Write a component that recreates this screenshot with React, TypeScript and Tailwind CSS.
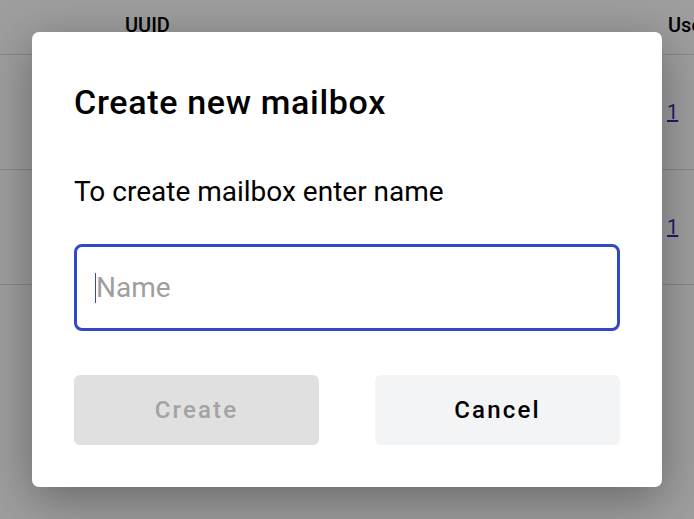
import React from "react";

export default function App() {
  return (
    <div
      className="relative w-[694px] h-[519px] overflow-hidden bg-white"
      style={{ fontFamily: "Roboto, 'Liberation Sans', sans-serif" }}
    >
      {/* Background table */}
      <div className="w-full">
        <div className="flex h-[55px] items-start border-b border-[#dcdcdc] pt-[13px] text-[20px] leading-[24px] font-medium text-black">
          <div className="w-[125px]" />
          <div className="flex-1">UUID</div>
          <div className="w-[26px] overflow-hidden whitespace-nowrap">Used</div>
        </div>
        {[0, 1].map((i) => (
          <div
            key={i}
            className="flex h-[115px] items-center border-b border-[#dcdcdc] text-[20px]"
          >
            <div className="flex-1" />
            <div className="w-[27px] text-[#2d2db3] underline">1</div>
          </div>
        ))}
      </div>

      {/* Overlay */}
      <div className="absolute inset-0 flex items-center justify-center bg-black/[0.38]">
        <div className="w-[630px] h-[455px] rounded-[7px] bg-white px-[42px] pt-[51px] shadow-[0_12px_48px_rgba(0,0,0,0.35)]">
          <h2 className="text-[34px] leading-[38px] font-medium tracking-[0.02em] text-black">
            Create new mailbox
          </h2>
          <p className="mt-[54px] text-[28px] leading-[34px] text-black">
            To create mailbox enter name
          </p>
          <div className="relative mt-[35px]">
            <input
              autoFocus
              placeholder="Name"
              className="block h-[87px] w-full rounded-[8px] border-[3px] border-[#2f49c8] pl-[19px] text-[28px] text-black placeholder:text-[#9e9e9e] outline-none caret-transparent"
            />
            <span className="pointer-events-none absolute left-[21px] top-[29px] h-[30px] w-px bg-[#2f49c8]" />
          </div>
          <div className="mt-[44px] grid grid-cols-2 gap-[56px]">
            <button className="h-[70px] rounded-[6px] bg-[#e0e0e0] text-[24px] font-medium tracking-[0.09em] text-[#a3a3a3]">
              Create
            </button>
            <button className="h-[70px] rounded-[6px] bg-[#f3f4f6] text-[24px] font-medium tracking-[0.09em] text-black">
              Cancel
            </button>
          </div>
        </div>
      </div>
    </div>
  );
}
